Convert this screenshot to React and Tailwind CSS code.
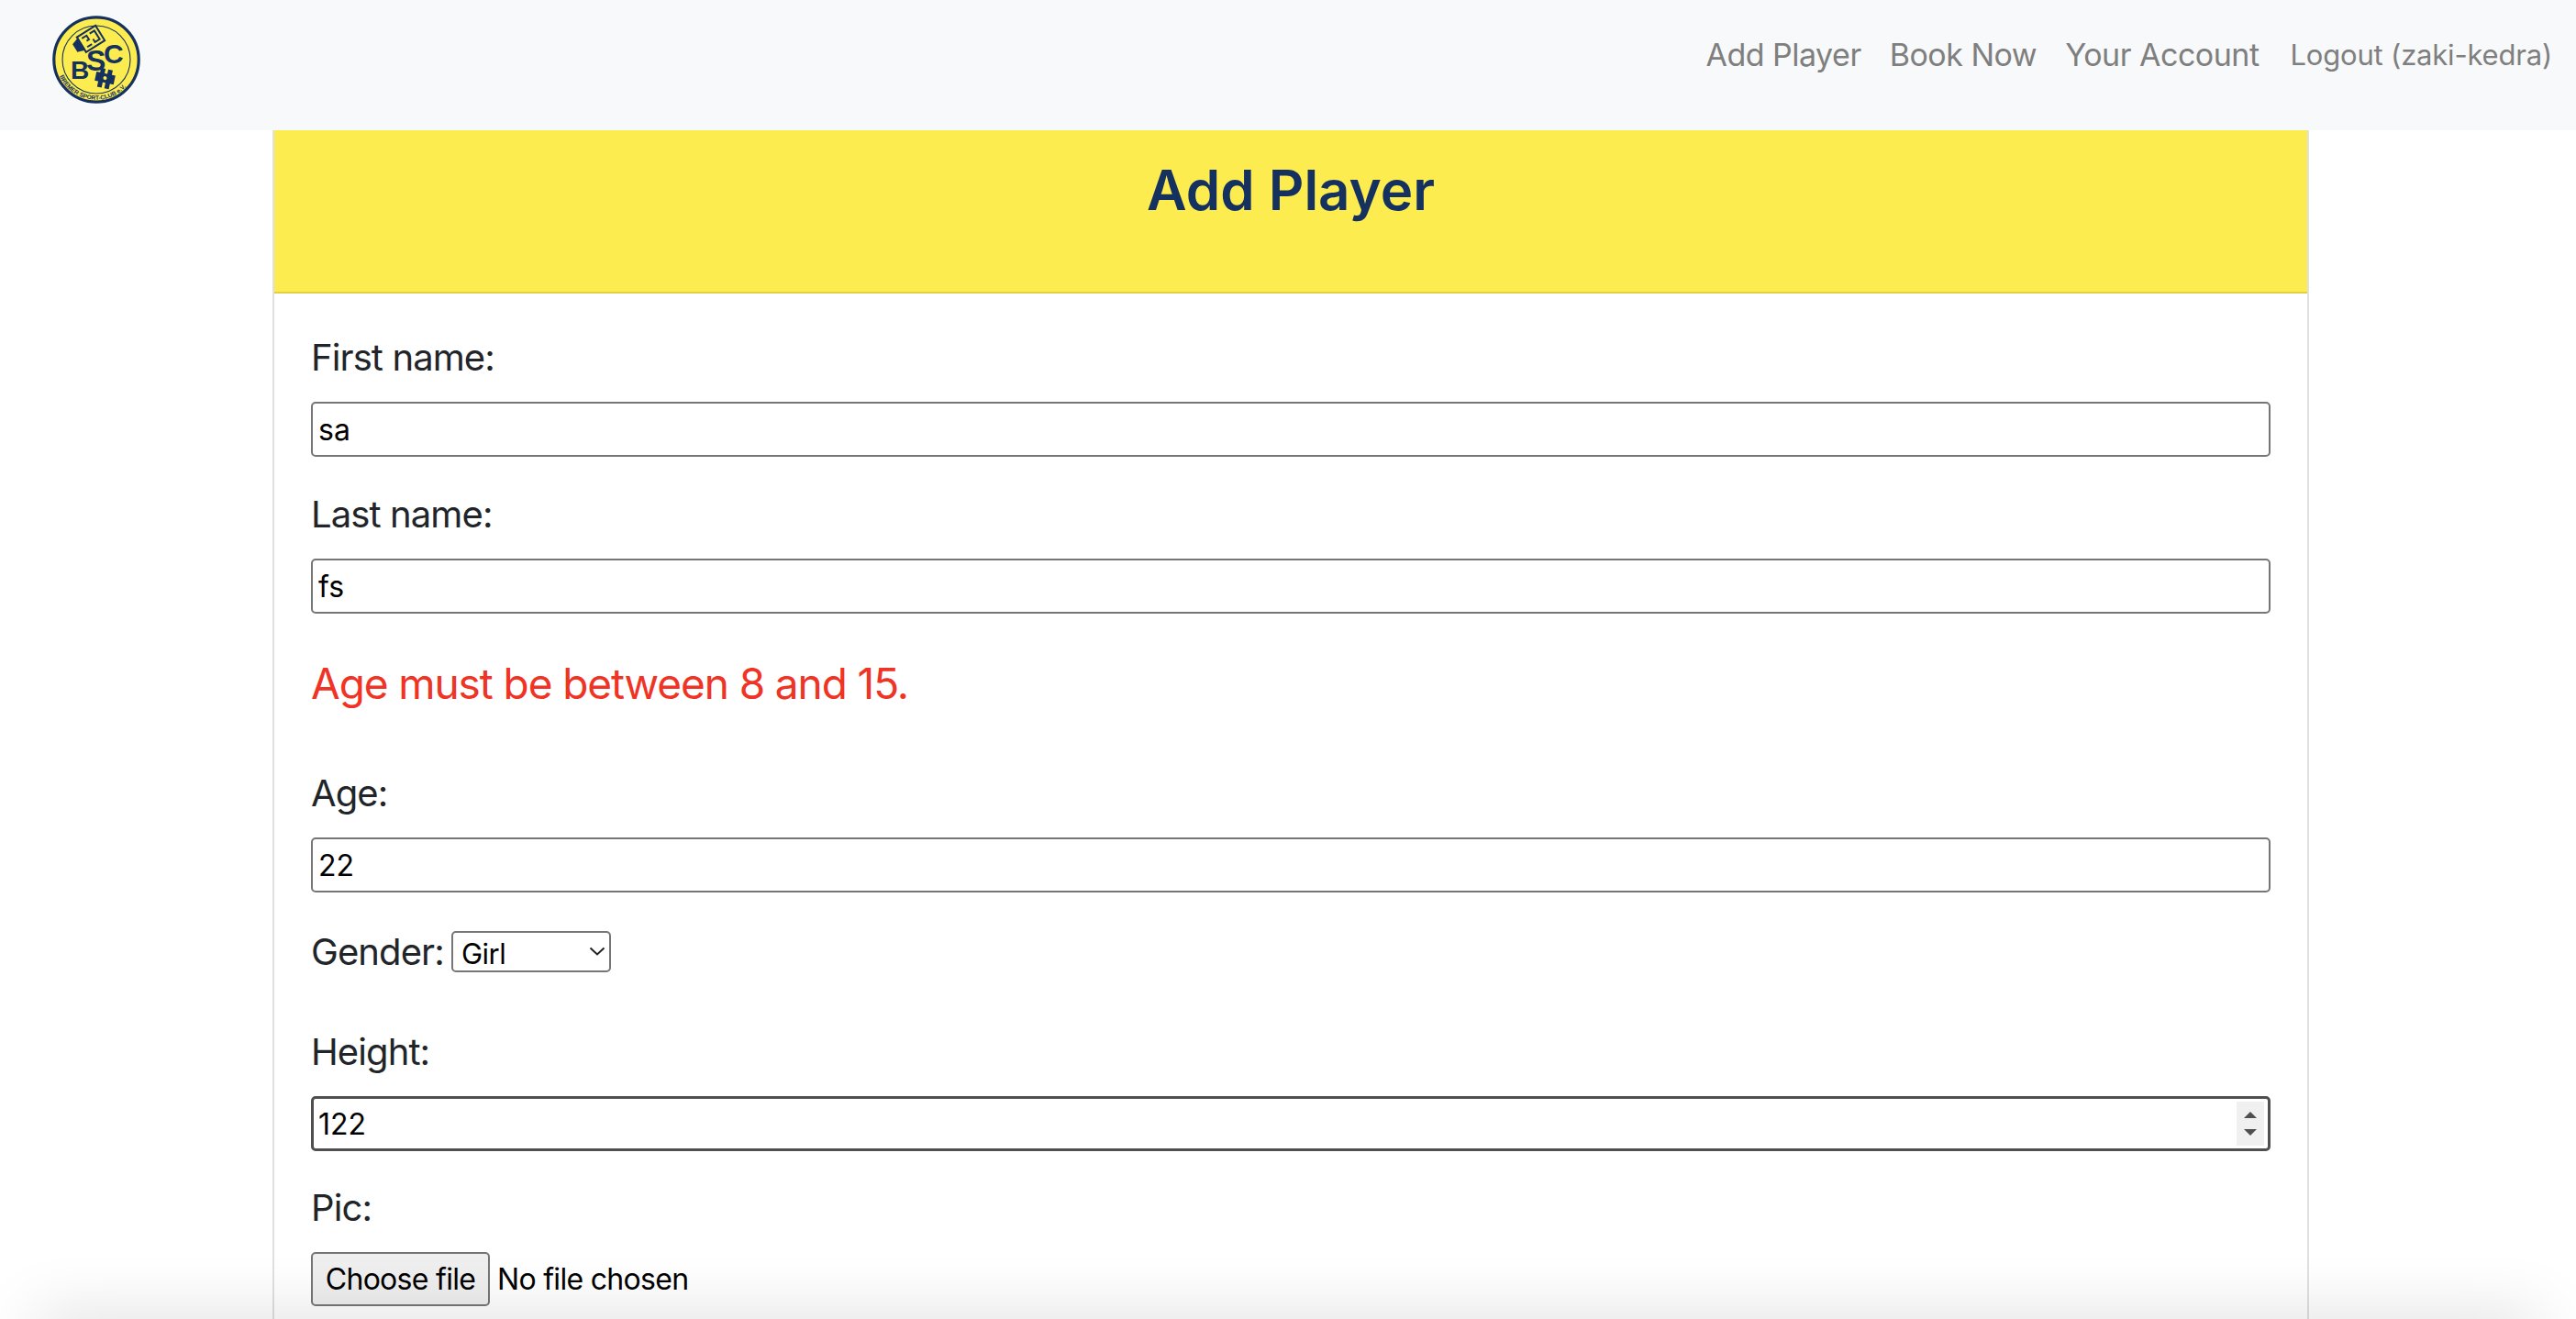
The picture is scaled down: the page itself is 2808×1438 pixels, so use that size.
import React from "react";

const BscLogo = () => (
  <svg width="96" height="96" viewBox="0 0 96 96">
    <circle cx="48" cy="48" r="46.2" fill="#fdec4f" stroke="#14315f" strokeWidth="3.2" />
    <circle cx="48" cy="48" r="37" fill="none" stroke="#14315f" strokeWidth="1.1" />
    {/* key */}
    <g transform="rotate(-32 40 26)">
      <path d="M22 21l9-3v16l-9-3z" fill="#14315f" />
      <rect x="30" y="17" width="24" height="19" fill="none" stroke="#14315f" strokeWidth="2" />
      <path d="M34 21h6v5h-3M44 21h6v11h-6v-4M34 32h6" fill="none" stroke="#14315f" strokeWidth="2" />
    </g>
    <text x="20" y="69" fontFamily="Liberation Sans, sans-serif" fontWeight="700" fontSize="28" fill="#14315f">B</text>
    <text x="37" y="60" fontFamily="Liberation Sans, sans-serif" fontWeight="700" fontSize="32" fill="#14315f">S</text>
    <text x="56" y="52" fontFamily="Liberation Sans, sans-serif" fontWeight="700" fontSize="30" fill="#14315f">C</text>
    {/* cross */}
    <g transform="rotate(12 57 68)" fill="#14315f">
      <rect x="47" y="63" width="21" height="10" />
      <rect x="51" y="58" width="5" height="21" />
      <rect x="59" y="58" width="5" height="21" />
      <circle cx="57.5" cy="68" r="2" fill="#fdec4f" />
    </g>
    <path id="bscArc" d="M8 66 A44 44 0 0 0 89 64" fill="none" />
    <text fontFamily="Liberation Sans, sans-serif" fontWeight="700" fontSize="6.6" fill="#14315f">
      <textPath href="#bscArc">BREMER SPORT-CLUB e.V.</textPath>
    </text>
  </svg>
);

const labelClass = "block text-[40px] leading-[48px] tracking-[-0.9px] text-[#212529]";

const Field = ({ label, value, className = "" }) => (
  <div className={className}>
    <label className={labelClass}>{label}</label>
    <input
      readOnly
      value={value}
      className="mt-[24px] block h-[60px] w-full rounded-[5px] border-2 border-[#767676] px-[6px] text-[32px] text-black outline-none"
    />
  </div>
);

const App = () => {
  return (
    <div className="relative h-[1438px] overflow-hidden bg-white font-['Inter',sans-serif]">
      <nav className="flex h-[142px] items-start justify-between bg-[#f8f9fa] pl-[57px] pr-[26px] pt-[17px]">
        <BscLogo />
        <div className="mt-[19px] flex items-center text-[34px] leading-[48px] tracking-[-0.5px] text-[#7f7f7f]">
          <a>Add Player</a>
          <a className="ml-[31px]">Book Now</a>
          <a className="ml-[31px]">Your Account</a>
          <a className="ml-[34px] text-[31px] tracking-[-0.2px]">Logout (zaki-kedra)</a>
        </div>
      </nav>

      <div className="ml-[297px] h-[1296px] w-[2220px] border-x-2 border-[#e0e0e0]">
        <div className="h-[178px] border-b-2 border-[#e3cf3f] bg-[#fdec4f] pt-[29px] text-center">
          <h2 className="text-[60px] font-semibold leading-[72px] text-[#14315f]">Add Player</h2>
        </div>

        <form className="px-[40px] pt-[46px]">
          <Field label="First name:" value="sa" />
          <Field label="Last name:" value="fs" className="mt-[39px]" />
          <p className="mt-[48px] text-[46px] leading-[56px] tracking-[-1.1px] text-[#ef3325]">Age must be between 8 and 15.</p>
          <Field label="Age:" value="22" className="mt-[68px]" />

          <div className="mt-[41px] flex items-start">
            <label className="text-[40px] leading-[48px] tracking-[-0.9px] text-[#212529]">Gender:</label>
            <div className="relative ml-[8px] mt-[1px] h-[45px] w-[174px]">
              <select className="h-full w-full appearance-none rounded-[5px] border-2 border-[#767676] bg-white pl-[9px] text-[31px] tracking-[-0.5px] text-black">
                <option>Girl</option>
                <option>Boy</option>
              </select>
              <svg className="pointer-events-none absolute right-[6px] top-[17px]" width="18" height="10" viewBox="0 0 18 10" fill="none" stroke="#222" strokeWidth="2">
                <path d="M1.5 1.5 9 8.5l7.5-7" />
              </svg>
            </div>
          </div>

          <div className="mt-[61px]">
            <label className={labelClass}>Height:</label>
            <div className="relative mt-[24px]">
              <input
                readOnly
                value="122"
                className="block h-[60px] w-full rounded-[5px] border-[3px] border-[#4f4f4f] px-[5px] text-[32px] text-black outline-none"
              />
              <div className="absolute right-[7px] top-[6px] flex h-[48px] w-[30px] flex-col items-center justify-center gap-[12px] bg-[#f0f0f0]">
                <span className="h-0 w-0 border-x-[7px] border-b-[7px] border-x-transparent border-b-[#4f4f4f]" />
                <span className="h-0 w-0 border-x-[7px] border-t-[7px] border-x-transparent border-t-[#4f4f4f]" />
              </div>
            </div>
          </div>

          <div className="mt-[38px]">
            <label className={labelClass}>Pic:</label>
            <div className="mt-[24px] flex items-center text-[32px] tracking-[-0.7px] text-black">
              <button type="button" className="h-[59px] w-[195px] rounded-[5px] border-2 border-[#767676] bg-[#efefef]">Choose file</button>
              <span className="ml-[8px]">No file chosen</span>
            </div>
          </div>
        </form>
      </div>

      {/* window shadow along the bottom edge, fades at the corners */}
      <div className="pointer-events-none absolute left-[40px] right-[40px] top-[1438px] h-[40px] shadow-[0_0_70px_rgba(0,0,0,0.17)]" />
    </div>
  );
};

export default App;
